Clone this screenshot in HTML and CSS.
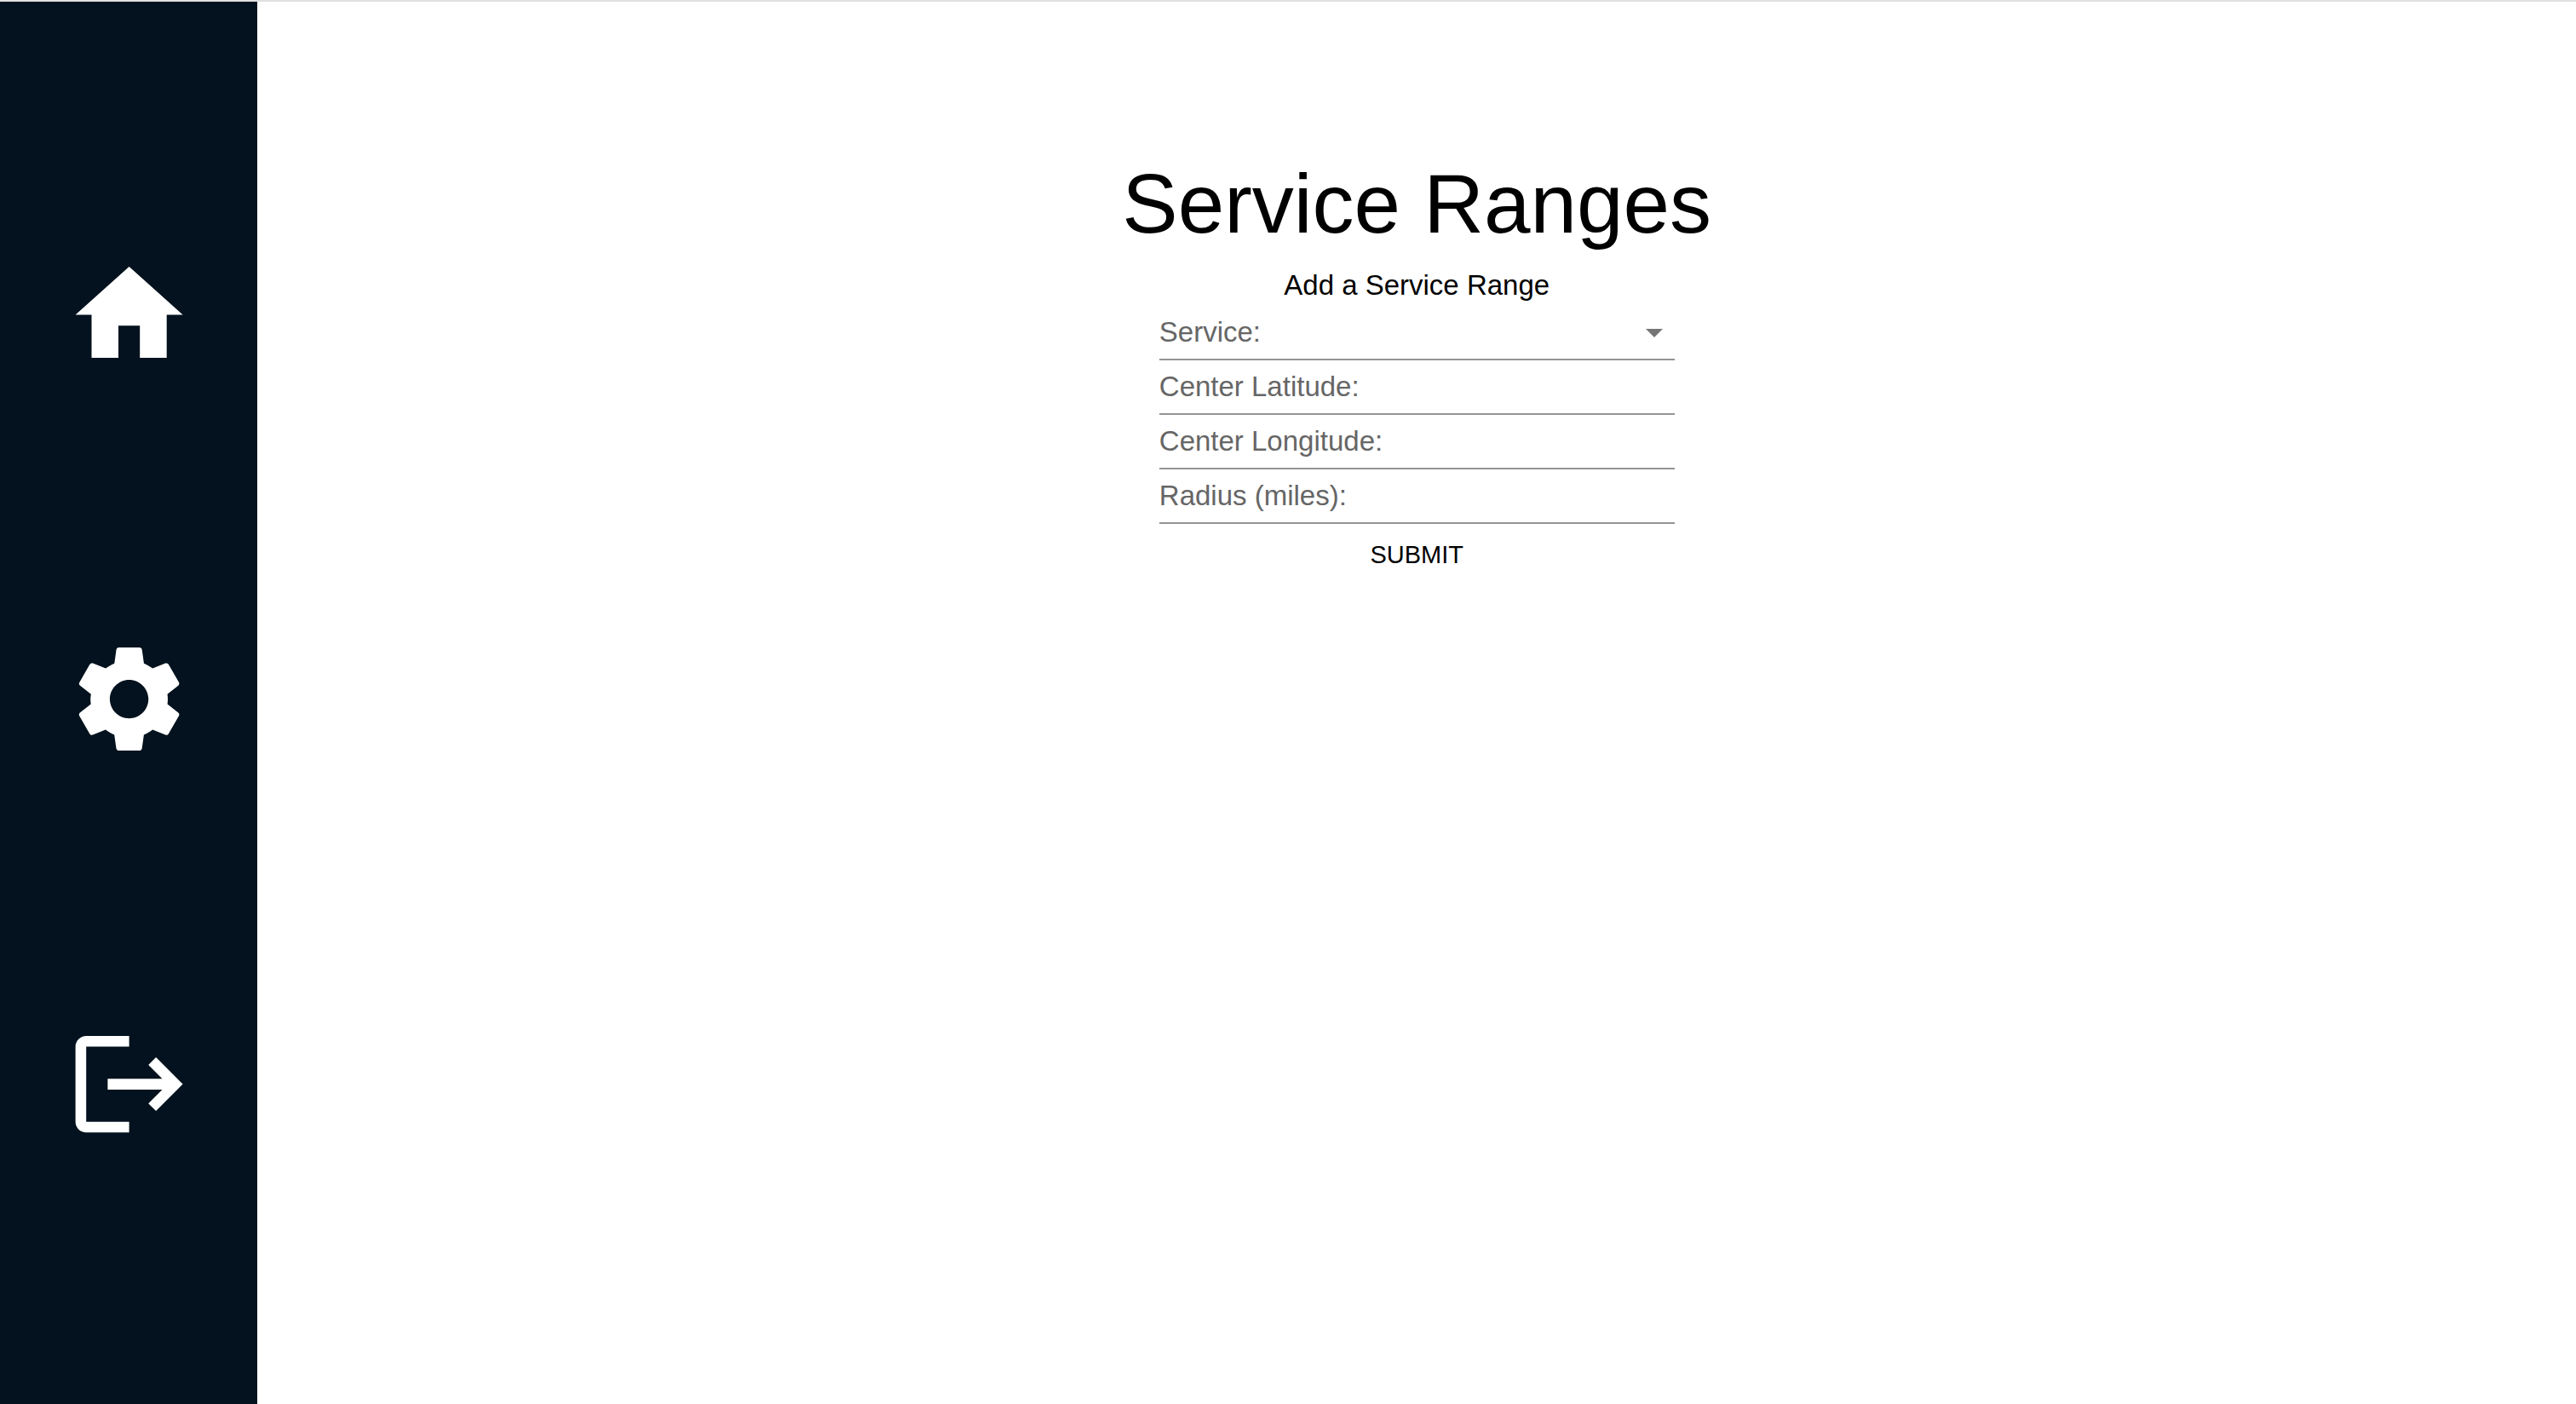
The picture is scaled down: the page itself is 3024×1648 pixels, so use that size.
FILE: index.html
```html
<!DOCTYPE html>
<html lang="en">
<head>
  <meta charset="utf-8">
  <meta name="viewport" content="width=device-width, initial-scale=1">
  <title>Service Ranges</title>
  <link rel="stylesheet" href="styles.css">
</head>
<body>
  <div class="app">
    <nav class="sidebar" aria-label="Main">
      <a class="nav-link" href="#home" aria-label="Home">
        <svg class="nav-icon" viewBox="0 0 24 24"><path d="M10 20v-6h4v6h5v-8h3L12 3 2 12h3v8z"/></svg>
      </a>
      <a class="nav-link" href="#settings" aria-label="Settings">
        <svg class="nav-icon" viewBox="0 0 24 24"><path d="M19.14 12.94c.04-.3.06-.61.06-.94 0-.32-.02-.64-.07-.94l2.03-1.58c.18-.14.23-.41.12-.61l-1.92-3.32c-.12-.22-.37-.29-.59-.22l-2.39.96c-.5-.38-1.03-.7-1.62-.94l-.36-2.54c-.04-.24-.24-.41-.48-.41h-3.84c-.24 0-.43.17-.47.41l-.36 2.54c-.59.24-1.13.57-1.62.94l-2.39-.96c-.22-.08-.47 0-.59.22L2.74 8.87c-.12.21-.08.47.12.61l2.03 1.58c-.05.3-.09.63-.09.94s.02.64.07.94l-2.03 1.58c-.18.14-.23.41-.12.61l1.92 3.32c.12.22.37.29.59.22l2.39-.96c.5.38 1.03.7 1.62.94l.36 2.54c.05.24.24.41.48.41h3.84c.24 0 .44-.17.47-.41l.36-2.54c.59-.24 1.13-.56 1.62-.94l2.39.96c.22.08.47 0 .59-.22l1.92-3.32c.12-.22.07-.47-.12-.61l-2.01-1.58zM12 15.6c-1.98 0-3.6-1.62-3.6-3.6s1.62-3.6 3.6-3.6 3.6 1.62 3.6 3.6-1.62 3.6-3.6 3.6z"/></svg>
      </a>
      <a class="nav-link" href="#logout" aria-label="Log out">
        <svg class="nav-icon" viewBox="0 0 24 24"><path d="M17 7l-1.41 1.41L18.17 11H8v2h10.17l-2.58 2.58L17 17l5-5zM4 5h8V3H4c-1.1 0-2 .9-2 2v14c0 1.1.9 2 2 2h8v-2H4V5z"/></svg>
      </a>
    </nav>
    <main class="content">
      <h1 class="title">Service Ranges</h1>
      <form class="range-form">
        <h2 class="subtitle">Add a Service Range</h2>
        <div class="field">
          <label class="field-label" for="service">Service:</label>
          <select class="field-control" id="service" name="service"><option value=""></option></select>
          <svg class="field-arrow" viewBox="0 0 24 24" aria-hidden="true"><path d="M7 10l5 5 5-5z"/></svg>
        </div>
        <div class="field">
          <label class="field-label" for="latitude">Center Latitude:</label>
          <input class="field-control" id="latitude" name="latitude" type="text">
        </div>
        <div class="field">
          <label class="field-label" for="longitude">Center Longitude:</label>
          <input class="field-control" id="longitude" name="longitude" type="text">
        </div>
        <div class="field">
          <label class="field-label" for="radius">Radius (miles):</label>
          <input class="field-control" id="radius" name="radius" type="text">
        </div>
        <button class="submit" type="submit">SUBMIT</button>
      </form>
    </main>
  </div>
</body>
</html>
```
FILE: styles.css
```css
* {
  box-sizing: border-box;
}

body {
  margin: 0;
  background: #fff;
  color: #000;
  font-family: Helvetica, "Liberation Sans", Arial, sans-serif;
  font-size: 33px;
  line-height: 48px;
}

.app {
  display: flex;
  min-height: 100vh;
  border-top: 2px solid #e0e0e0;
}

.sidebar {
  display: flex;
  flex: 0 0 10%;
  flex-direction: column;
  align-items: center;
  justify-content: space-evenly;
  background: #03121e;
}

.nav-link {
  width: 50%;
  padding-bottom: 8px;
}

.nav-icon {
  display: block;
  width: 100%;
  fill: #fff;
}

.content {
  display: flex;
  flex: 1;
  flex-direction: column;
  align-items: center;
  gap: 16px;
  padding-top: 181px;
}

.title {
  margin: 0;
  font-size: 98px;
  font-weight: 400;
  line-height: 112px;
}

.range-form {
  display: flex;
  flex-direction: column;
  align-items: center;
  width: 20vw;
}

.subtitle {
  margin: 0;
  font-size: 33px;
  font-weight: 400;
}

.field {
  display: flex;
  align-items: center;
  width: 100%;
  height: 64px;
  border-bottom: 2px solid #949494;
}

.field-label {
  color: #666;
}

.field-control {
  flex: 1;
  min-width: 0;
  height: 100%;
  padding: 0 8px;
  border: 0;
  outline: 0;
  background: transparent;
  font: inherit;
  appearance: none;
}

.field-arrow {
  width: 48px;
  height: 48px;
  margin-left: -48px;
  fill: #757575;
  pointer-events: none;
}

.submit {
  padding: 12px 16px;
  border: 0;
  background: transparent;
  color: #000;
  font-family: inherit;
  font-size: 29px;
  line-height: 48px;
}
```
